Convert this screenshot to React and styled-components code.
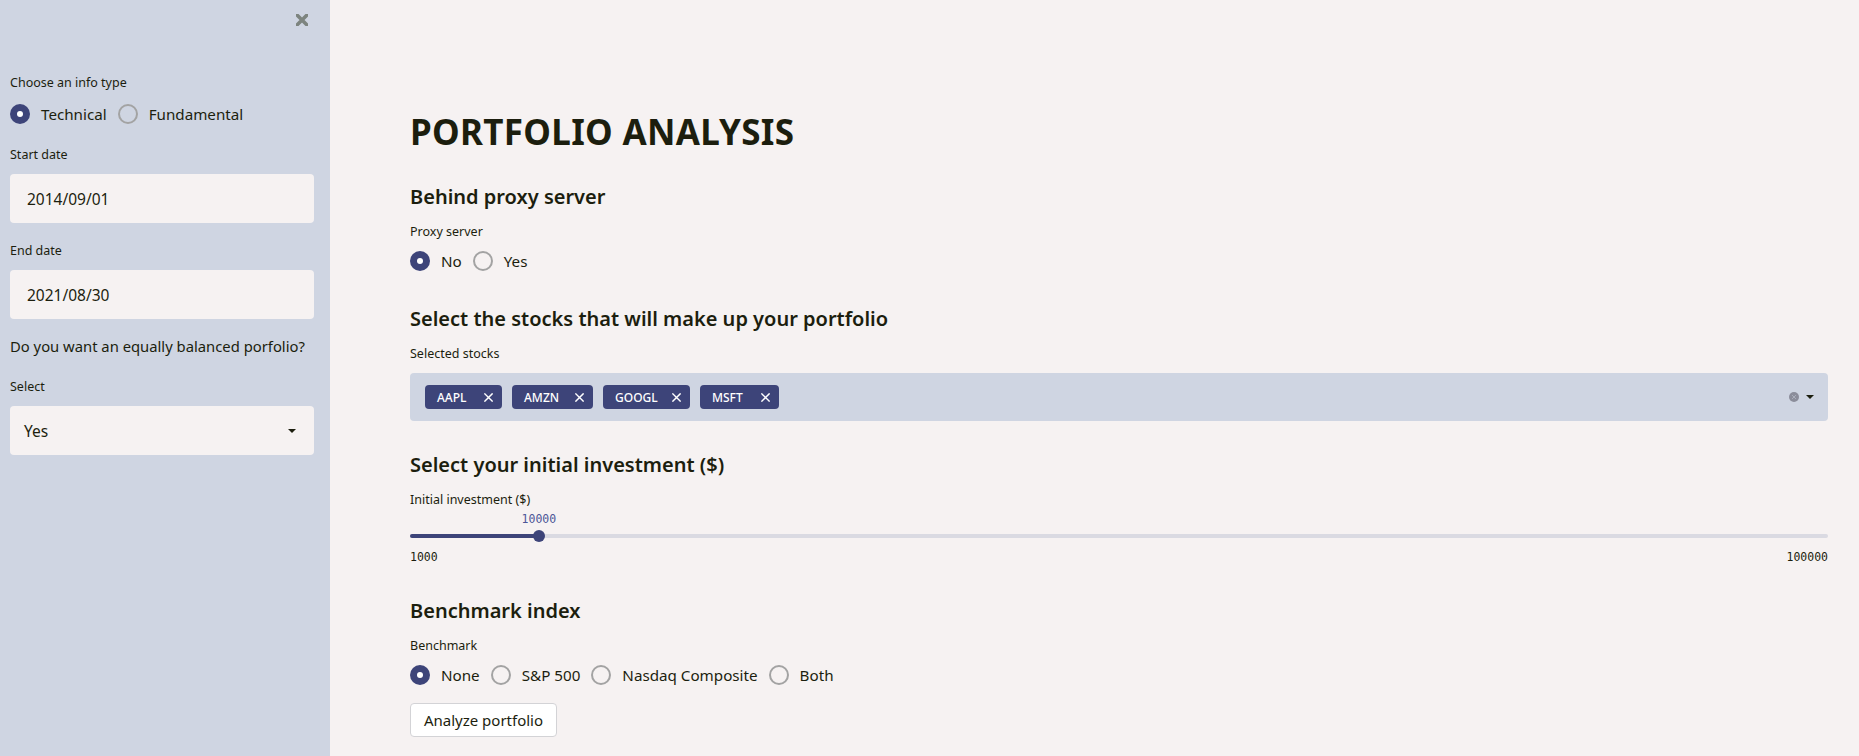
import React from 'react'
import styled, { createGlobalStyle } from 'styled-components'

const GlobalStyle = createGlobalStyle`
  html, body {
    margin: 0;
    padding: 0;
    background: #f6f2f2;
    font-family: 'Noto Sans', 'Open Sans', sans-serif;
    color: #1c1e0e;
  }
`

const primary = '#3d4479'

const Layout = styled.div`
  display: flex;
  width: 100vw;
  height: 756px;
  overflow: hidden;
`

const Sidebar = styled.aside`
  width: 330px;
  flex-shrink: 0;
  background: #cfd5e2;
  padding: 0 16px 0 10px;
  box-sizing: border-box;
  display: flex;
  flex-direction: column;
`

const CloseRow = styled.div`
  display: flex;
  justify-content: flex-end;
  height: 40px;
  align-items: center;
  margin-right: 6px;
  margin-bottom: 34px;
`

const Main = styled.main`
  flex: 1;
  padding: 108px 31px 0 80px;
  display: flex;
  flex-direction: column;
`

const Title = styled.h1`
  margin: 0 0 27px;
  font-size: 35px;
  line-height: 48px;
  font-weight: 700;
  letter-spacing: 0.3px;
`

const Heading = styled.h3`
  margin: ${p => p.$top || 0}px 0 12px;
  font-size: 20px;
  line-height: 28px;
  font-weight: 600;
`

const Label = styled.div`
  font-size: 12.5px;
  line-height: 18px;
  margin: ${p => p.$top || 0}px 0 ${p => (p.$bottom != null ? p.$bottom : 10)}px;
`

const Question = styled.div`
  font-size: 14.8px;
  line-height: 24px;
  white-space: nowrap;
  margin: 15px 0 20px;
`

const RadioGroup = styled.div`
  display: flex;
  align-items: center;
  height: 24px;
  gap: 11px;
  margin-top: ${p => p.$shift || 0}px;
`

const RadioOption = styled.label`
  display: flex;
  align-items: center;
  gap: 11px;
  font-size: 15.2px;
`

const RadioCircle = styled.span`
  width: 20px;
  height: 20px;
  border-radius: 50%;
  box-sizing: border-box;
  display: flex;
  align-items: center;
  justify-content: center;
  background: ${p => (p.$checked ? primary : 'transparent')};
  border: ${p => (p.$checked ? 'none' : '2px solid #a3a3a3')};

  &::after {
    content: '';
    display: ${p => (p.$checked ? 'block' : 'none')};
    width: 6px;
    height: 6px;
    border-radius: 50%;
    background: #fff;
  }
`

const Field = styled.div`
  height: 49px;
  background: #f6f2f2;
  border-radius: 4px;
  display: flex;
  align-items: center;
  justify-content: space-between;
  padding: 0 ${p => p.$padRight || 17}px 0 ${p => p.$padLeft || 17}px;
  font-size: 15.5px;
`

const Caret = styled.span`
  width: 0;
  height: 0;
  border-left: 4px solid transparent;
  border-right: 4px solid transparent;
  border-top: 4px solid #1c1e0e;
`

const MultiBox = styled.div`
  height: 48px;
  background: #cfd5e2;
  border-radius: 4px;
  display: flex;
  align-items: center;
  padding: 0 14px 0 15px;
`

const Chips = styled.div`
  display: flex;
  gap: 10px;
  flex: 1;
`

const Chip = styled.span`
  height: 24px;
  width: ${p => p.$w}px;
  box-sizing: border-box;
  background: ${primary};
  color: #fff;
  border-radius: 4px;
  display: flex;
  align-items: center;
  justify-content: space-between;
  padding: 0 9px 0 12px;
  font-size: 12px;
  font-weight: 500;
`

const BoxIcons = styled.div`
  display: flex;
  align-items: center;
  gap: 7px;
`

const ClearDot = styled.span`
  width: 10px;
  height: 10px;
  border-radius: 50%;
  background: #8b8d9a;
  display: flex;
  align-items: center;
  justify-content: center;
`

const Slider = styled.div`
  display: flex;
  flex-direction: column;
`

const ValueRow = styled.div`
  height: 14px;
  position: relative;
  margin-top: 3px;
`

const ThumbValue = styled.span`
  position: absolute;
  transform: translateX(-50%);
  font-family: 'DejaVu Sans Mono', 'Liberation Mono', monospace;
  font-size: 11.5px;
  line-height: 14px;
  color: #4c5697;
`

const Track = styled.div`
  height: 4px;
  border-radius: 2px;
  background: #dadae2;
  margin-top: 8px;
  position: relative;
`

const Fill = styled.div`
  height: 100%;
  border-radius: 2px;
  background: ${primary};
`

const Thumb = styled.span`
  position: absolute;
  top: 50%;
  width: 12px;
  height: 12px;
  border-radius: 50%;
  background: ${primary};
  transform: translate(-50%, -50%);
`

const RangeRow = styled.div`
  display: flex;
  justify-content: space-between;
  margin-top: 12px;
  font-family: 'DejaVu Sans Mono', 'Liberation Mono', monospace;
  font-size: 11.5px;
  line-height: 14px;
`

const Button = styled.button`
  align-self: flex-start;
  margin-top: 16px;
  height: 34px;
  width: 147px;
  background: #ffffff;
  border: 1px solid #d3d3d6;
  border-radius: 4px;
  font-family: inherit;
  font-size: 15px;
  color: #1c1e0e;
  padding: 0;
`

const XIcon = ({ size = 10, color = '#fff', width = 1.6 }) => (
  <svg width={size} height={size} viewBox="0 0 10 10">
    <path d="M1 1 L9 9 M9 1 L1 9" stroke={color} strokeWidth={width} strokeLinecap="square" />
  </svg>
)

const Radios = ({ options, checked, shift }) => (
  <RadioGroup $shift={shift}>
    {options.map(o => (
      <RadioOption key={o}>
        <RadioCircle $checked={o === checked} />
        {o}
      </RadioOption>
    ))}
  </RadioGroup>
)

const stocks = [
  { name: 'AAPL', w: 77 },
  { name: 'AMZN', w: 81 },
  { name: 'GOOGL', w: 87 },
  { name: 'MSFT', w: 79 },
]

const min = 1000
const max = 100000
const value = 10000

export default function App() {
  const pct = ((value - min) / (max - min)) * 100
  return (
    <Layout>
      <GlobalStyle />
      <Sidebar>
        <CloseRow>
          <XIcon size={12} color="#7d847f" width={3} />
        </CloseRow>
        <Label>Choose an info type</Label>
        <Radios options={['Technical', 'Fundamental']} checked="Technical" shift={0} />
        <Label $top={20}>Start date</Label>
        <Field>2014/09/01</Field>
        <Label $top={19}>End date</Label>
        <Field>2021/08/30</Field>
        <Question>Do you want an equally balanced porfolio?</Question>
        <Label>Select</Label>
        <Field $padLeft={14} $padRight={18}>
          Yes
          <Caret />
        </Field>
      </Sidebar>
      <Main>
        <Title>PORTFOLIO ANALYSIS</Title>
        <Heading>Behind proxy server</Heading>
        <Label>Proxy server</Label>
        <Radios options={['No', 'Yes']} checked="No" shift={-2} />

        <Heading $top={32}>Select the stocks that will make up your portfolio</Heading>
        <Label>Selected stocks</Label>
        <MultiBox>
          <Chips>
            {stocks.map(s => (
              <Chip key={s.name} $w={s.w}>
                {s.name}
                <XIcon size={9} />
              </Chip>
            ))}
          </Chips>
          <BoxIcons>
            <ClearDot>
              <XIcon size={4} color="#cfd5e2" width={1.2} />
            </ClearDot>
            <Caret />
          </BoxIcons>
        </MultiBox>

        <Heading $top={30}>Select your initial investment ($)</Heading>
        <Label $bottom={0}>Initial investment ($)</Label>
        <Slider>
          <ValueRow>
            <ThumbValue style={{ left: `${pct}%` }}>{value}</ThumbValue>
          </ValueRow>
          <Track>
            <Fill style={{ width: `${pct}%` }} />
            <Thumb style={{ left: `${pct}%` }} />
          </Track>
          <RangeRow>
            <span>{min}</span>
            <span>{max}</span>
          </RangeRow>
        </Slider>

        <Heading $top={33}>Benchmark index</Heading>
        <Label>Benchmark</Label>
        <Radios options={['None', 'S&P 500', 'Nasdaq Composite', 'Both']} checked="None" shift={-2} />
        <Button>Analyze portfolio</Button>
      </Main>
    </Layout>
  )
}
